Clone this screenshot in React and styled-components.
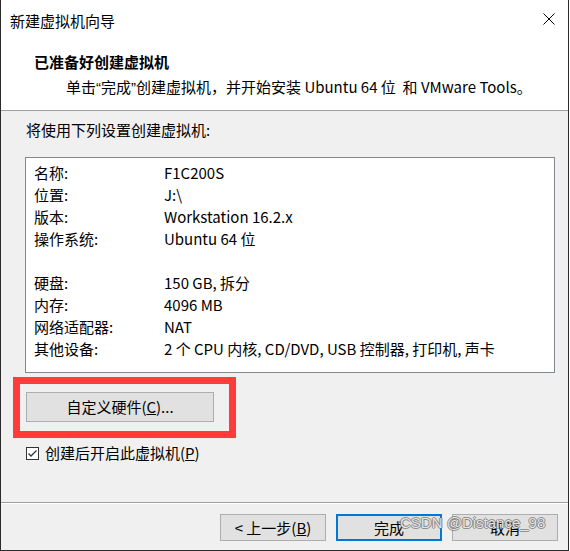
import React from "react";
import styled, { createGlobalStyle } from "styled-components";

const GlobalStyle = createGlobalStyle`
  html, body {
    margin: 0;
    padding: 0;
    background: #ffffff;
  }
  * {
    box-sizing: border-box;
  }
`;

const Window = styled.div`
  position: relative;
  width: 569px;
  height: 551px;
  display: flex;
  flex-direction: column;
  border-left: 1px solid #2b2b2b;
  border-right: 1px solid #2b2b2b;
  border-bottom: 1px solid #2b2b2b;
  font-family: "Noto Sans CJK SC", "Microsoft YaHei", sans-serif;
  font-size: 15px;
  color: #000;
  background: #f0f0f0;
`;

const TitleBar = styled.div`
  height: 42px;
  display: flex;
  align-items: center;
  justify-content: space-between;
  padding: 0 13px 0 9px;
  background: #fff;
`;

const TitleText = styled.span`
  line-height: 20px;
`;

const CloseIcon = styled.svg`
  width: 12px;
  height: 12px;
  margin-top: -4px;
`;

const Header = styled.div`
  height: 69px;
  padding: 10px 0 0 33px;
  background: #fff;
  border-bottom: 1px solid #a0a0a0;
`;

const HeaderTitle = styled.div`
  font-weight: 700;
  line-height: 20px;
`;

const HeaderSub = styled.div`
  margin: 5px 0 0 32px;
  line-height: 20px;
  white-space: nowrap;
`;

const Quote = styled.span`
  font-family: "Liberation Sans", Arial, sans-serif;
`;

const Body = styled.div`
  flex: 1;
  padding: 9px 13px 0 24px;
`;

const Intro = styled.div`
  line-height: 20px;
  padding-left: 1px;
`;

const SummaryBox = styled.div`
  margin-top: 17px;
  width: 530px;
  height: 216px;
  background: #fff;
  border: 1px solid #828790;
  padding: 4px 0 0 8px;
`;

const Row = styled.div`
  display: grid;
  grid-template-columns: 130px 1fr;
  height: 22px;
  line-height: 22px;
  white-space: nowrap;
`;

const ButtonArea = styled.div`
  position: relative;
  margin: 19px 0 0 1px;
  width: 188px;
`;

const Button = styled.button`
  width: ${(p) => p.$w || 106}px;
  height: ${(p) => p.$h || 27}px;
  padding: 0;
  font-family: inherit;
  font-size: 15px;
  line-height: 20px;
  color: #000;
  background: #e1e1e1;
  border: ${(p) => (p.$default ? "2px solid #0078d7" : "1px solid #adadad")};
  display: flex;
  align-items: center;
  justify-content: center;
`;

const Highlight = styled.div`
  position: absolute;
  left: -13px;
  top: -15px;
  width: 223px;
  height: 61px;
  border: 7px solid #ff3b3b;
  pointer-events: none;
`;

const CheckRow = styled.label`
  display: flex;
  align-items: center;
  gap: 6px;
  margin: 21px 0 0 1px;
  line-height: 20px;
`;

const CheckBox = styled.span`
  width: 13px;
  height: 13px;
  border: 1px solid #333;
  background: #fff;
  display: flex;
  align-items: center;
  justify-content: center;
`;

const Footer = styled.div`
  height: 48px;
  display: flex;
  justify-content: flex-end;
  gap: 10px;
  padding: 11px 10px 0 0;
  border-top: 1px solid #a0a0a0;
  box-shadow: inset 0 1px 0 #ffffff;
`;

const Watermark = styled.div`
  position: absolute;
  left: 399px;
  top: 513px;
  font-family: "Liberation Sans", Arial, sans-serif;
  font-size: 15px;
  line-height: 20px;
  color: rgba(250, 250, 250, 0.85);
  text-shadow: 1px 0 0 rgba(110, 110, 110, 0.7), -1px 0 0 rgba(110, 110, 110, 0.7),
    0 1px 0 rgba(110, 110, 110, 0.7), 0 -1px 0 rgba(110, 110, 110, 0.7);
  pointer-events: none;
`;

const rows = [
  ["名称:", "F1C200S"],
  ["位置:", "J:\\"],
  ["版本:", "Workstation 16.2.x"],
  ["操作系统:", "Ubuntu 64 位"],
  ["", ""],
  ["硬盘:", "150 GB, 拆分"],
  ["内存:", "4096 MB"],
  ["网络适配器:", "NAT"],
  ["其他设备:", "2 个 CPU 内核, CD/DVD, USB 控制器, 打印机, 声卡"],
];

export default function App() {
  return (
    <>
      <GlobalStyle />
      <Window>
        <TitleBar>
          <TitleText>新建虚拟机向导</TitleText>
          <CloseIcon viewBox="0 0 12 12">
            <path d="M0.5 0.5 L11.5 11.5 M11.5 0.5 L0.5 11.5" stroke="#000" strokeWidth="1" fill="none" />
          </CloseIcon>
        </TitleBar>
        <Header>
          <HeaderTitle>已准备好创建虚拟机</HeaderTitle>
          <HeaderSub>
            单击<Quote>“</Quote>完成<Quote>”</Quote>创建虚拟机，并开始安装 Ubuntu 64 位&nbsp; 和 VMware Tools。
          </HeaderSub>
        </Header>
        <Body>
          <Intro>将使用下列设置创建虚拟机:</Intro>
          <SummaryBox>
            {rows.map(([k, v], i) => (
              <Row key={i}>
                <span>{k}</span>
                <span>{v}</span>
              </Row>
            ))}
          </SummaryBox>
          <ButtonArea>
            <Button $w={188} $h={30}>
              自定义硬件(<u>C</u>)...
            </Button>
            <Highlight />
          </ButtonArea>
          <CheckRow>
            <CheckBox>
              <svg width="11" height="11" viewBox="0 0 11 11">
                <path d="M1.5 5.5 L4 8 L9.5 2.5" stroke="#333" strokeWidth="1.3" fill="none" />
              </svg>
            </CheckBox>
            <span>
              创建后开启此虚拟机(<u>P</u>)
            </span>
          </CheckRow>
        </Body>
        <Footer>
          <Button>
            &lt; 上一步(<u>B</u>)
          </Button>
          <Button $default>完成</Button>
          <Button>取消</Button>
        </Footer>
        <Watermark>CSDN @Distance_98</Watermark>
      </Window>
    </>
  );
}
